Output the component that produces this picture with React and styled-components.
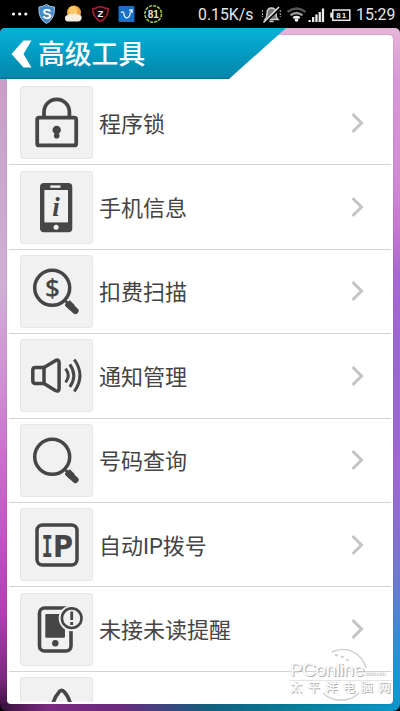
import styled, { createGlobalStyle } from "styled-components"

const GlobalStyle = createGlobalStyle`
body {
  margin: 0;
  background-color: #000;
}
`;

const Phone = styled.div`
display: flex;
flex-direction: column;
width: 400px;
height: 711px;
overflow: hidden;
background-color: #000;
font-family: Roboto, "Noto Sans CJK SC", sans-serif;
`;

const StatusBar = styled.div`
display: flex;
justify-content: space-between;
align-items: center;
flex: none;
height: 28px;
padding: 0 6px 0 11px;
box-sizing: border-box;
`;

const StatusGroup = styled.div`
display: flex;
align-items: center;
gap: ${(props) => props.$gap}px;
`;

const StatusText = styled.span`
width: ${(props) => props.$width}px;
color: #e6e6e6;
font-size: 15.8px;
line-height: 28px;
white-space: nowrap;
padding-top: 2px;
`;

const Wallpaper = styled.div`
position: relative;
flex: 1;
display: flex;
min-height: 0;
padding: 7px;
box-sizing: border-box;
border-radius: 5px 5px 7px 7px;
overflow: hidden;
background:
  linear-gradient(to right, #35103a 0, #7b2a80 12%, #6a2a80 30%, #12607e 52%, #087f9c 75%, #0b96c8 100%) bottom / 100% 7px no-repeat,
  linear-gradient(to bottom, #e6b4d8 0, #d797d8 8%, #d38fd5 20%, #c878d2 29%, #a868d0 36%, #9a68cd 50%, #a068d0 65%, #8870cc 74%, #6c7ccc 81%, #3a8bd0 89%, #1797d2 95%, #0b96c8 100%) right / 50% 100% no-repeat,
  linear-gradient(to bottom, #c79ac6 0, #cba6cf 20%, #d0aed6 38%, #ce90d2 52%, #ca6ccb 64%, #c34fc2 76%, #b33cb2 86%, #7b2a80 95%, #35103a 100%);
`;

const Card = styled.div`
display: flex;
flex: 1;
padding: 46px 2px 2px;
box-sizing: border-box;
background-color: #fff;
border-radius: 4px;
box-shadow: 0 0 1px rgba(60, 30, 70, 0.6);
`;

const List = styled.ul`
flex: 1;
margin: 0;
padding: 0;
overflow: hidden;
list-style: none;
`;

const Row = styled.li`
display: flex;
align-items: center;
height: 84.4px;
padding: 0 26px 0 11px;
box-sizing: border-box;
border-bottom: 1px solid #d4d4d4;
`;

const Tile = styled.div`
flex: none;
width: 73px;
height: 73px;
box-sizing: border-box;
background-color: #f1f1f1;
border-radius: 4px;
box-shadow: inset 0 0 0 1px #e6e6e6;

svg {
  display: block;
}
`;

const Label = styled.span`
flex: 1;
margin-left: 6px;
padding-top: 4px;
color: #444;
font-size: 22px;
line-height: 32px;
`;

const Header = styled.header`
position: absolute;
top: 0;
left: 0;
display: flex;
align-items: center;
width: 286px;
height: 51px;
padding-left: 11px;
box-sizing: border-box;
background: linear-gradient(to bottom, #05b2da, #0386ab 96%, #04718f);
clip-path: polygon(0 0, 100% 0, 229px 100%, 0 100%);
`;

const Title = styled.h1`
margin: 0 0 0 6px;
padding-top: 3px;
color: #fff;
font-size: 26.8px;
font-weight: 500;
line-height: 40px;
`;

const Watermark = styled.div`
position: absolute;
left: 289px;
top: 618px;
width: 104px;
height: 66px;
color: #fff;
font-family: "Liberation Sans", "Noto Sans CJK SC", sans-serif;
text-shadow: 1px 1px 0 #b0b0b0, -0.5px -0.5px 0 #d6d6d6;

svg {
  position: absolute;
  left: 0;
  top: 0;
}
`;

const MarkName = styled.div`
position: relative;
display: flex;
align-items: flex-end;
height: 31px;
margin-top: 3px;
padding-left: 1px;
font-size: 19px;
letter-spacing: -0.4px;
line-height: 20px;
`;

const MarkDomain = styled.span`
font-size: 6px;
letter-spacing: 0;
line-height: 13px;
color: #f4f4f4;
`;

const MarkChinese = styled.div`
position: relative;
padding-left: 1px;
margin-top: 1px;
font-size: 12px;
font-weight: 500;
letter-spacing: 5.7px;
line-height: 15px;
white-space: nowrap;
`;

const Ink = "#464646";

const LockIcon = () => (
  <g stroke={Ink} strokeWidth="3.8" fill="none">
    <path d="M24 31V26a12.7 12.7 0 0 1 25.4 0v5" />
    <rect x="17.2" y="31.6" width="39" height="27.8" rx="2" />
    <g fill={Ink} stroke="none">
      <circle cx="36.7" cy="44" r="4.2" />
      <circle cx="36.7" cy="49.8" r="2.8" />
    </g>
  </g>
);

const PhoneInfoIcon = () => (
  <g>
    <rect x="20" y="12" width="32.3" height="49.3" rx="4" fill={Ink} />
    <rect x="24.4" y="19" width="23.6" height="32.4" fill="#f1f1f1" />
    <rect x="30.3" y="14.4" width="10.2" height="2.4" fill="#f1f1f1" />
    <circle cx="36.1" cy="56.2" r="2.5" fill="#f1f1f1" />
    <text x="36" y="44.5" fill={Ink} fontSize="27" fontWeight="bold" fontStyle="italic" textAnchor="middle" fontFamily="Liberation Serif, serif">i</text>
  </g>
);

const Magnifier = ({ children }) => (
  <g stroke={Ink} fill="none">
    <circle cx="32.2" cy="32.8" r="17.5" strokeWidth="3.5" />
    <path d="M44.5 45l4 4" strokeWidth="2.5" />
    <path d="M48.6 49.6l6.8 6.2" strokeWidth="6.4" strokeLinecap="round" />
    <path d="M44.8 50.3l5-5l5 5l-5 5z" fill={Ink} stroke="none" />
    {children}
  </g>
);

const ScanIcon = () => (
  <Magnifier>
    <text x="32.4" y="41.8" fill={Ink} stroke="none" fontSize="26" fontWeight="600" textAnchor="middle" fontFamily="Open Sans, sans-serif">$</text>
  </Magnifier>
);

const SoundIcon = () => (
  <g stroke={Ink} strokeWidth="3.5" fill="none" strokeLinejoin="round">
    <path d="M24 28.6H15.5q-2.7 0-2.7 2.7v10.5q0 2.7 2.7 2.7H24z" />
    <path d="M24 28.6L35.3 21.7q3.8-1.8 3.8 2V49.5q0 3.8-3.8 2L24 44.5" />
    <g strokeWidth="3">
      <path d="M45.6 29.6q5.2 7 0 13.8" />
      <path d="M49.8 25.3q8 11.3 0 22.6" />
      <path d="M54.3 20.5q11.3 16 0 32" />
    </g>
  </g>
);

const IpIcon = () => (
  <g fill={Ink}>
    <rect x="17" y="17" width="40" height="40" rx="5.5" fill="none" stroke={Ink} strokeWidth="3.5" />
    <text x="21.8" y="48.5" fontSize="29.5" fontWeight="bold" fontFamily="DejaVu Sans Mono, monospace" textLength="11" lengthAdjust="spacingAndGlyphs">I</text>
    <text x="32.9" y="48.5" fontSize="29.5" fontWeight="bold" fontFamily="DejaVu Sans, sans-serif" textLength="20" lengthAdjust="spacingAndGlyphs">P</text>
  </g>
);

const MissedIcon = () => (
  <g>
    <rect x="19.5" y="15" width="31.5" height="43" rx="5" fill="none" stroke={Ink} strokeWidth="3.6" />
    <rect x="25.3" y="21" width="19.7" height="23.8" rx="1" fill={Ink} />
    <circle cx="35.3" cy="50.3" r="3.2" fill={Ink} />
    <circle cx="51.7" cy="25.2" r="13" fill="#f1f1f1" />
    <circle cx="51.7" cy="25.2" r="9.8" fill="none" stroke={Ink} strokeWidth="2.6" />
    <path d="M51.7 18.5v8.5M51.7 29v3" stroke={Ink} strokeWidth="2.8" />
  </g>
);

const PeakIcon = () => (
  <path d="M33.2 25.5Q35 19.5 39.5 14.5q2.2-2.3 4.4 0Q48.5 19.5 50 25.5" fill="none" stroke={Ink} strokeWidth="3.6" />
);

const tools = [
  { label: "程序锁", icon: <LockIcon /> },
  { label: "手机信息", icon: <PhoneInfoIcon /> },
  { label: "扣费扫描", icon: <ScanIcon /> },
  { label: "通知管理", icon: <SoundIcon /> },
  { label: "号码查询", icon: <Magnifier /> },
  { label: "自动IP拨号", icon: <IpIcon /> },
  { label: "未接未读提醒", icon: <MissedIcon /> },
  { label: "", icon: <PeakIcon /> },
];

const NotificationIcons = () => (
  <svg width="154" height="28" viewBox="11 0 154 28">
    <g fill="#fff">
      <circle cx="13.5" cy="14" r="1.6" />
      <circle cx="19.7" cy="14" r="1.6" />
      <circle cx="25.8" cy="14" r="1.6" />
    </g>
    <path d="M39 7q4 0 7.5-2.5Q50 7 54.5 7q.5 12-8 16.5Q38 19 39 7z" fill="#4388c9" stroke="#a9cbe8" strokeWidth="1" />
    <text x="46.8" y="18.8" fill="#fff" fontSize="14" fontWeight="bold" textAnchor="middle" fontFamily="Liberation Sans, sans-serif">S</text>
    <circle cx="74" cy="12.5" r="7" fill="#f3a339" />
    <circle cx="73" cy="10.5" r="4.3" fill="#fbc86a" />
    <path d="M68 21.5a3.3 3.3 0 0 1-.5-6.500q2-2 5-.5q3-2.500 5.500 0q4 0 3.700 3.500q-.3 3.300-4 3.500z" fill="#f4eee0" />
    <path d="M95 8.5Q100.5 5 106 8.5H108.3Q108.5 17 100.500 21.500Q92.500 17 92.700 8.500z" fill="#160408" stroke="#a81f32" strokeWidth="1.5" strokeLinejoin="round" />
    <text x="100.3" y="17.3" fill="#fff" fontSize="9.5" fontWeight="bold" textAnchor="middle" fontFamily="Liberation Sans, sans-serif">Z</text>
    <rect x="118.5" y="6" width="16" height="16" rx="1" fill="#1b6fc4" />
    <path d="M121 12.5q3-1.500 3 1.500t2.500 4q3.500-.5 3.500-4.500l2-3.500m-3 .3l3-.5l.3 3" fill="none" stroke="#dcecff" strokeWidth="1.3" />
    <circle cx="153.2" cy="14" r="8.3" fill="none" stroke="#9fc93c" strokeWidth="1.6" strokeDasharray="3.3 1" />
    <text x="153.2" y="17.7" fill="#dfe8c8" fontSize="10" fontWeight="bold" textAnchor="middle" fontFamily="Liberation Sans, sans-serif">81</text>
  </svg>
);

const SystemIcons = () => (
  <svg width="93" height="28" viewBox="260 0 93 28">
    <path d="M265 19.5q2-2 2-6.500q0-5 4.500-5t4.500 5q0 4.500 2 6.500zM269.500 21.500h4" fill="#777" stroke="#ccc" strokeWidth="1.4" />
    <path d="M264.5 22.500L279.500 8" stroke="#000" strokeWidth="3" />
    <path d="M263.500 22.500L279 7" stroke="#eee" strokeWidth="1.4" />
    <path d="M262.500 10v7M280.300 10v7" stroke="#999" strokeWidth="1.2" strokeDasharray="2 1" />
    <g fill="none" strokeWidth="2.4">
      <path d="M287.5 12q9-6.800 18 0" stroke="#555" />
      <path d="M290.5 15.2q6-4.500 12 0" stroke="#999" />
      <path d="M293.300 18q3.200-2 6.400 0" stroke="#eee" />
    </g>
    <circle cx="296.5" cy="20" r="1.8" fill="#fff" />
    <path d="M308.500 22v-2h2.300v2zM312 22v-5h2.300v5zM315.300 22v-7.500h2.300v7.500zM318.600 22v-10h2.300v10zM321.800 22v-13.500h2.300v13.500z" fill="#eee" />
    <rect x="332.8" y="10" width="17" height="10.3" fill="none" stroke="#e8e8e8" strokeWidth="1.5" />
    <rect x="330.2" y="12.6" width="2" height="5" fill="#e8e8e8" />
    <text x="341.2" y="18.2" fill="#eee" fontSize="8" fontWeight="bold" textAnchor="middle" fontFamily="Liberation Sans, sans-serif" textLength="10">81</text>
  </svg>
);

const BackArrow = () => (
  <svg width="21" height="30" viewBox="0 0 21 30">
    <path d="M12.5 1.500H20.500L12.500 15L20.500 28.500H12.500L.5 15z" fill="#fff" />
  </svg>
);

const Chevron = () => (
  <svg width="14" height="24" viewBox="0 0 14 24">
    <path d="M1.5 3L10.5 12L1.5 21" fill="none" stroke="#c4c4c4" strokeWidth="3" />
  </svg>
);

const GlobeLines = () => (
  <svg width="104" height="66" viewBox="289 646 104 66">
    <g fill="none" stroke="#cfcfcf" strokeWidth="1.4">
      <path d="M332 652A24 24 0 0 1 366 668" />
      <path d="M323 693A26 26 0 0 0 359 693" />
      <path d="M335 655q8 1 14 6" strokeWidth="2" strokeDasharray="3 3" />
      <path d="M290 680.500H392" stroke="#dedede" strokeWidth="0.800" />
    </g>
  </svg>
);

export default function App() {
  return (
    <Phone>
      <GlobalStyle />
      <StatusBar>
        <StatusGroup $gap={0}>
          <NotificationIcons />
        </StatusGroup>
        <StatusGroup $gap={3}>
          <StatusText $width={59}>0.15K/s</StatusText>
          <SystemIcons />
          <StatusText $width={38}>15:29</StatusText>
        </StatusGroup>
      </StatusBar>
      <Wallpaper>
        <Card>
          <List>
            {tools.map((tool) => (
              <Row key={tool.label}>
                <Tile>
                  <svg width="73" height="73" viewBox="0 0 73 73">{tool.icon}</svg>
                </Tile>
                <Label>{tool.label}</Label>
                {tool.label && <Chevron />}
              </Row>
            ))}
          </List>
        </Card>
        <Header>
          <BackArrow />
          <Title>高级工具</Title>
        </Header>
        <Watermark>
          <GlobeLines />
          <MarkName>
            PConline<MarkDomain>.com.cn</MarkDomain>
          </MarkName>
          <MarkChinese>太平洋电脑网</MarkChinese>
        </Watermark>
      </Wallpaper>
    </Phone>
  )
}
